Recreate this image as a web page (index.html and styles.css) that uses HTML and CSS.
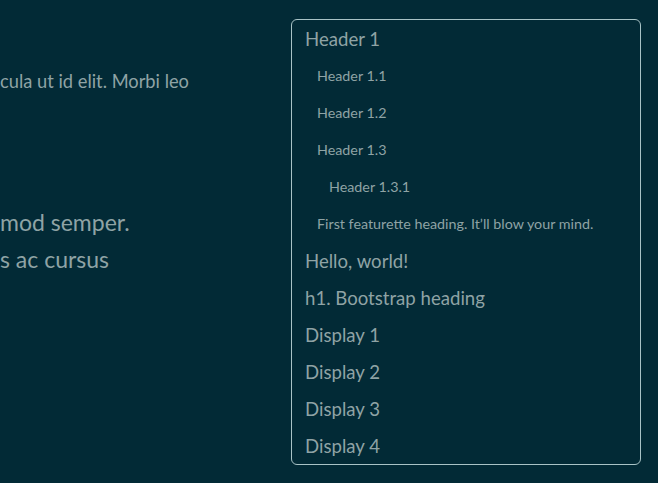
FILE: index.html
```html
<!DOCTYPE html>
<html lang="en">
<head>
<meta charset="utf-8">
<title>TOC</title>
<link rel="stylesheet" href="styles.css">
</head>
<body>
<div class="page">
  <main class="content">
    <p class="lead-line">cula ut id elit. Morbi leo</p>
    <div class="big">
      <p class="big-line">mod semper.</p>
      <p class="big-line">s ac cursus</p>
    </div>
  </main>
  <nav class="toc">
    <a class="item l1">Header 1</a>
    <a class="item l2">Header 1.1</a>
    <a class="item l2">Header 1.2</a>
    <a class="item l2">Header 1.3</a>
    <a class="item l3">Header 1.3.1</a>
    <a class="item l2">First featurette heading. It’ll blow your mind.</a>
    <a class="item l1">Hello, world!</a>
    <a class="item l1">h1. Bootstrap heading</a>
    <a class="item l1">Display 1</a>
    <a class="item l1">Display 2</a>
    <a class="item l1">Display 3</a>
    <a class="item l1">Display 4</a>
  </nav>
</div>
</body>
</html>
```

FILE: styles.css
```css
html, body {
  margin: 0;
  padding: 0;
  background: #022a36;
  height: 100%;
  overflow: hidden;
}
body {
  font-family: Lato, "Noto Sans", sans-serif;
  color: #8fa3a5;
}
.page {
  display: flex;
  padding: 19px 17px 0 0;
}
.content {
  flex: 1;
  overflow: hidden;
  white-space: nowrap;
}
.lead-line {
  margin: 49px 0 0 0;
  font-size: 18.3px;
  line-height: 26px;
}
.big {
  margin-top: 110px;
}
.big-line {
  margin: 0;
  font-size: 23px;
  line-height: 37px;
}
.toc {
  width: 348px;
  flex: none;
  border: 1px solid #a9c3c6;
  border-radius: 6px;
  display: flex;
  flex-direction: column;
}
.item {
  display: flex;
  align-items: center;
  height: 37px;
  padding-left: 13px;
  white-space: nowrap;
  color: #8fa3a5;
}
.l1 { font-size: 18.6px; }
.l2 { font-size: 14.3px; padding-left: 25px; }
.l3 { font-size: 14.3px; padding-left: 37px; }
```
